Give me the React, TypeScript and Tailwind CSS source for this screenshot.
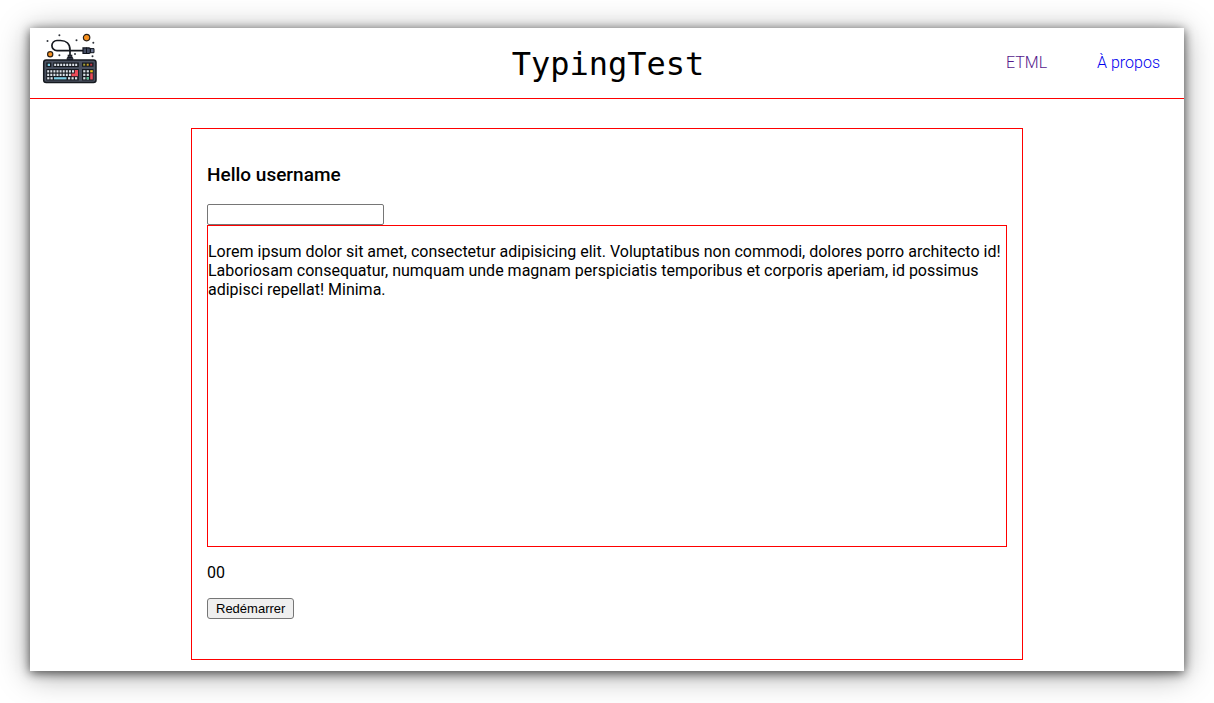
import React from "react";

const range = (n: number) => Array.from({ length: n }, (_, i) => i);

function KeyboardLogo() {
  return (
    <svg viewBox="0 0 56 52" className="h-[52px] w-14" aria-hidden="true">
      <path
        d="M28 23V17c0-6.500-4-9.500-9.500-9.500h-3.500a5 5 0 0 0 0 10.200H42"
        fill="none"
        stroke="#16191f"
        strokeWidth="1.700"
      />
      <rect x="26.200" y="22.200" width="3.600" height="3" fill="#33394a" stroke="#16191f" />
      <rect x="25.200" y="24.500" width="5.600" height="2.500" rx=".6" fill="#33394a" stroke="#16191f" />
      <path d="M41 14.900h6l1.400.8v4l-1.400.8h-6z" fill="#444c63" stroke="#11151d" strokeWidth="1.200" />
      <path d="M48.500 15.600h3.500v4.100h-3.500z" fill="#6f7994" stroke="#11151d" />
      <path d="M44.500 14.500v6" stroke="#11151d" />
      <circle cx="44.600" cy="4.600" r="3.200" fill="#f7901e" stroke="#2b2118" strokeWidth="1.200" />
      <circle cx="8.200" cy="21.200" r="2.600" fill="#f7901e" stroke="#2b2118" strokeWidth="1.200" />
      <g fill="#30343b">
        <circle cx="5.500" cy="8" r="1" />
        <circle cx="17.400" cy="2.300" r="1" />
        <circle cx="34.500" cy="7.200" r="1" />
        <circle cx="51.300" cy="9.700" r="1" />
        <circle cx="17.400" cy="22.200" r="1" />
        <circle cx="33" cy="21" r="1" />
        <circle cx="50.500" cy="23.300" r="1" />
      </g>
      <rect x="1.700" y="27" width="52.300" height="22.500" rx="2.500" fill="#4a5160" stroke="#15191f" strokeWidth="1.500" />
      <g fill="#15191f">
        <rect x="4.300" y="29.500" width="5" height="4.600" />
        <rect x="11.300" y="29.500" width="25.500" height="4.600" />
        <rect x="40" y="29.500" width="11.500" height="4.200" />
        <rect x="4.300" y="36" width="32.500" height="11.500" />
        <rect x="40" y="36" width="11.500" height="11.500" />
      </g>
      <rect x="5.700" y="30.700" width="2.300" height="2.300" fill="#80cfe6" />
      <g fill="#dce2e8">
        {range(8).map((i) => (
          <rect key={i} x={12.2 + i * 3} y="30.700" width="2" height="2.300" />
        ))}
        {range(9).map((i) => (
          <rect key={i} x={5.2 + i * 3.1} y="37.200" width="2" height="2.300" />
        ))}
        {range(8).map((i) => (
          <rect key={i} x={5.2 + i * 3.1} y="40.700" width="2" height="2.300" />
        ))}
        {[5.2, 8.5, 26, 29.5, 33].map((x) => (
          <rect key={x} x={x} y="44.200" width="2.200" height="2.200" />
        ))}
        {[37.2, 40.7, 44.2].map((y) => (
          <React.Fragment key={y}>
            <rect x="41.200" y={y} width="2.200" height="2.200" />
            <rect x="44.700" y={y} width="2.200" height="2.200" />
          </React.Fragment>
        ))}
      </g>
      <path d="M32.800 37H36v6.200h-6.500v-2.700h3.300z" fill="#ed4b59" />
      <path d="M12 44.200h12.500v2.200H12z" fill="#80cfe6" />
      <path d="M48.200 40.300h2.600v6.200h-2.600z" fill="#ed4b59" />
      <path d="M48.200 37.200h2.600v2.200h-2.600z" fill="#f5c51b" />
      <path d="M44.700 44.200h2.200v2.200h-2.200z" fill="#4ec191" />
      <path d="M41.200 30.700h2v2h-2z" fill="#a6a337" />
      <path d="M44.700 30.700h2v2h-2z" fill="#d3a526" />
      <path d="M48.200 30.700h2v2h-2z" fill="#c53646" />
    </svg>
  );
}

export default function App() {
  return (
    <div className="min-h-screen bg-white px-[30px] pt-7 pb-8 font-['Roboto',sans-serif] text-base font-normal leading-[19px] text-black">
      <div className="bg-white pb-[11px] shadow-[0_2px_10px_rgba(0,0,0,0.65),0_4px_30px_rgba(0,0,0,0.35)]">
        <header className="grid h-[71px] grid-cols-[1fr_auto_1fr] items-center border-b border-[#ff0000] pr-6 pb-0.5 pl-3">
          <a href="#accueil" aria-label="TypingTest" className="justify-self-start pb-1.5">
            <KeyboardLogo />
          </a>
          <h1 className="pt-1 pl-3.5 font-['DejaVu_Sans_Mono',monospace] text-[32px] font-normal leading-[48px]">
            TypingTest
          </h1>
          <nav className="flex gap-[50px] justify-self-end font-light">
            <a href="#etml" className="text-[#551a8b]">ETML</a>
            <a href="#a-propos" className="text-[#0000ee]">À propos</a>
          </nav>
        </header>
        <main className="mx-auto mt-[29px] max-w-[832px] border border-[#ff0000] px-[15px] pt-[35px] pb-10">
          <h3 className="text-[19px] font-medium leading-[22px]">Hello username</h3>
          <input
            type="text"
            aria-label="Votre saisie"
            className="mt-[18px] block h-[21px] w-[177px] rounded-[2px] border border-[#767676] bg-white px-0.5 text-[13px]"
          />
          <section className="min-h-[322px] border border-[#ff0000] pt-4">
            <p>
              Lorem ipsum dolor sit amet, consectetur adipisicing elit. Voluptatibus non commodi, dolores porro
              architecto id! Laboriosam consequatur, numquam unde magnam perspiciatis temporibus et corporis aperiam,
              id possimus adipisci repellat! Minima.
            </p>
          </section>
          <p className="mt-4">00</p>
          <button
            type="button"
            className="mt-4 block h-[21px] rounded-[3px] border border-[#767676] bg-[#efefef] px-2 font-['Liberation_Sans',sans-serif] text-[13px] font-normal leading-[19px]"
          >
            Redémarrer
          </button>
        </main>
      </div>
    </div>
  );
}
